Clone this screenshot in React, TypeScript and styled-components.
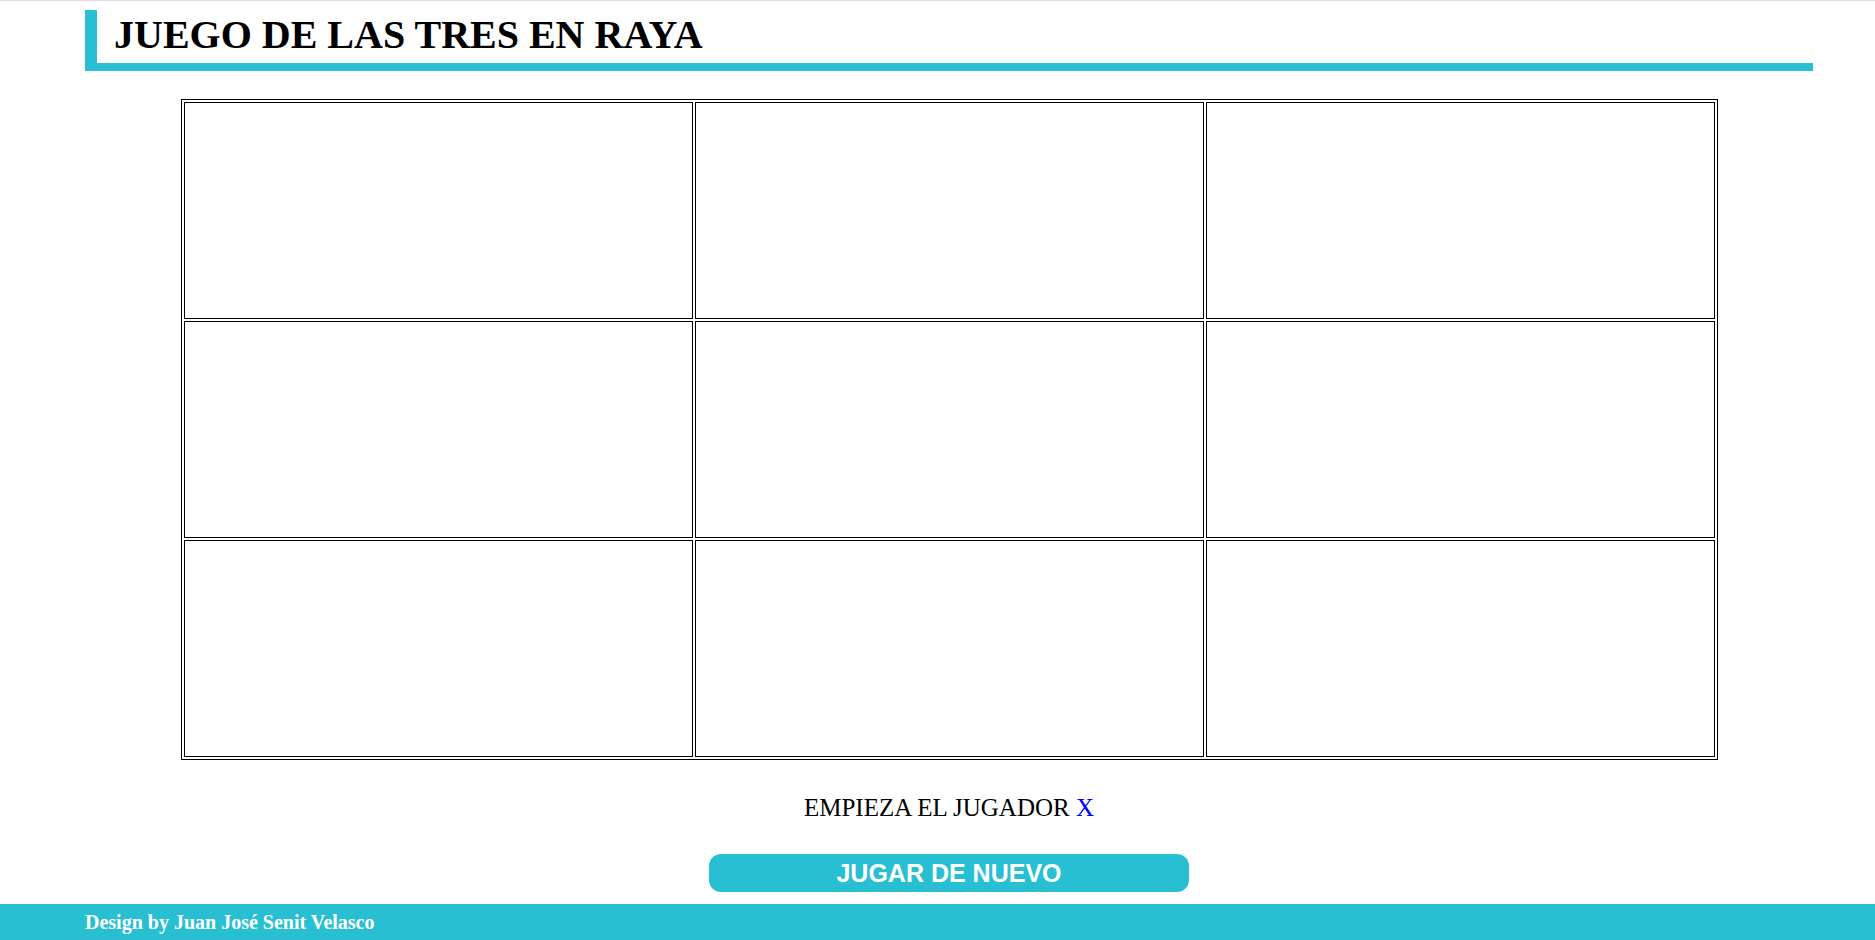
import React from "react";
import styled, { createGlobalStyle } from "styled-components";

const TEAL = "#29bfd3";

const GlobalStyle = createGlobalStyle`
  html, body {
    margin: 0;
    padding: 0;
    background: #ffffff;
  }
  body {
    font-family: "Liberation Serif", "Times New Roman", serif;
    color: #000000;
  }
`;

const Page = styled.div`
  box-sizing: border-box;
  min-height: 100vh;
  display: flex;
  flex-direction: column;
  border-top: 1px solid #dcdde0;
`;

const Main = styled.main`
  width: 1728px;
  margin-left: 85px;
  padding-top: 9px;
  display: flex;
  flex-direction: column;
  align-items: center;
`;

const Header = styled.header`
  box-sizing: border-box;
  align-self: stretch;
  height: 61px;
  border-left: 12px solid ${TEAL};
  border-bottom: 8px solid ${TEAL};
  padding: 1px 0 0 17px;
`;

const Title = styled.h1`
  margin: 0;
  font-family: "Liberation Serif", "Times New Roman", serif;
  font-weight: 700;
  font-size: 40px;
  line-height: normal;
`;

const Board = styled.div`
  box-sizing: border-box;
  width: 1537px;
  margin-top: 28px;
  border: 1px solid #000000;
  padding: 2px;
  display: grid;
  grid-template-columns: repeat(3, 1fr);
  grid-auto-rows: 217px;
  gap: 2px;
`;

const Cell = styled.div`
  box-sizing: border-box;
  border: 1px solid #000000;
  background: #ffffff;
  cursor: pointer;
`;

const Status = styled.p`
  margin: 34px 0 0;
  font-family: "Liberation Serif", "Times New Roman", serif;
  font-size: 25px;
  line-height: normal;
  text-align: center;
`;

const Player = styled.span<{ $color: string }>`
  color: ${(p) => p.$color};
`;

const ResetButton = styled.button`
  box-sizing: border-box;
  margin-top: 32px;
  width: 480px;
  height: 38px;
  border: none;
  border-radius: 12px;
  background: ${TEAL};
  color: #ffffff;
  font-family: "Liberation Sans", Arial, sans-serif;
  font-weight: 700;
  font-size: 25px;
  padding: 0;
  cursor: pointer;
`;

const Footer = styled.footer`
  margin-top: auto;
  height: 36px;
  background: ${TEAL};
  display: flex;
  align-items: center;
  padding-left: 85px;
`;

const Credit = styled.span`
  font-family: "Liberation Serif", "Times New Roman", serif;
  font-weight: 700;
  font-size: 20px;
  color: #ffffff;
`;

export default function App() {
  const cells = Array.from({ length: 9 }, (_, i) => i);
  return (
    <>
      <GlobalStyle />
      <Page>
        <Main>
          <Header>
            <Title>JUEGO DE LAS TRES EN RAYA</Title>
          </Header>
          <Board>
            {cells.map((i) => (
              <Cell key={i} />
            ))}
          </Board>
          <Status>
            EMPIEZA EL JUGADOR <Player $color="#0000ff">X</Player>
          </Status>
          <ResetButton type="button">JUGAR DE NUEVO</ResetButton>
        </Main>
        <Footer>
          <Credit>Design by Juan José Senit Velasco</Credit>
        </Footer>
      </Page>
    </>
  );
}
